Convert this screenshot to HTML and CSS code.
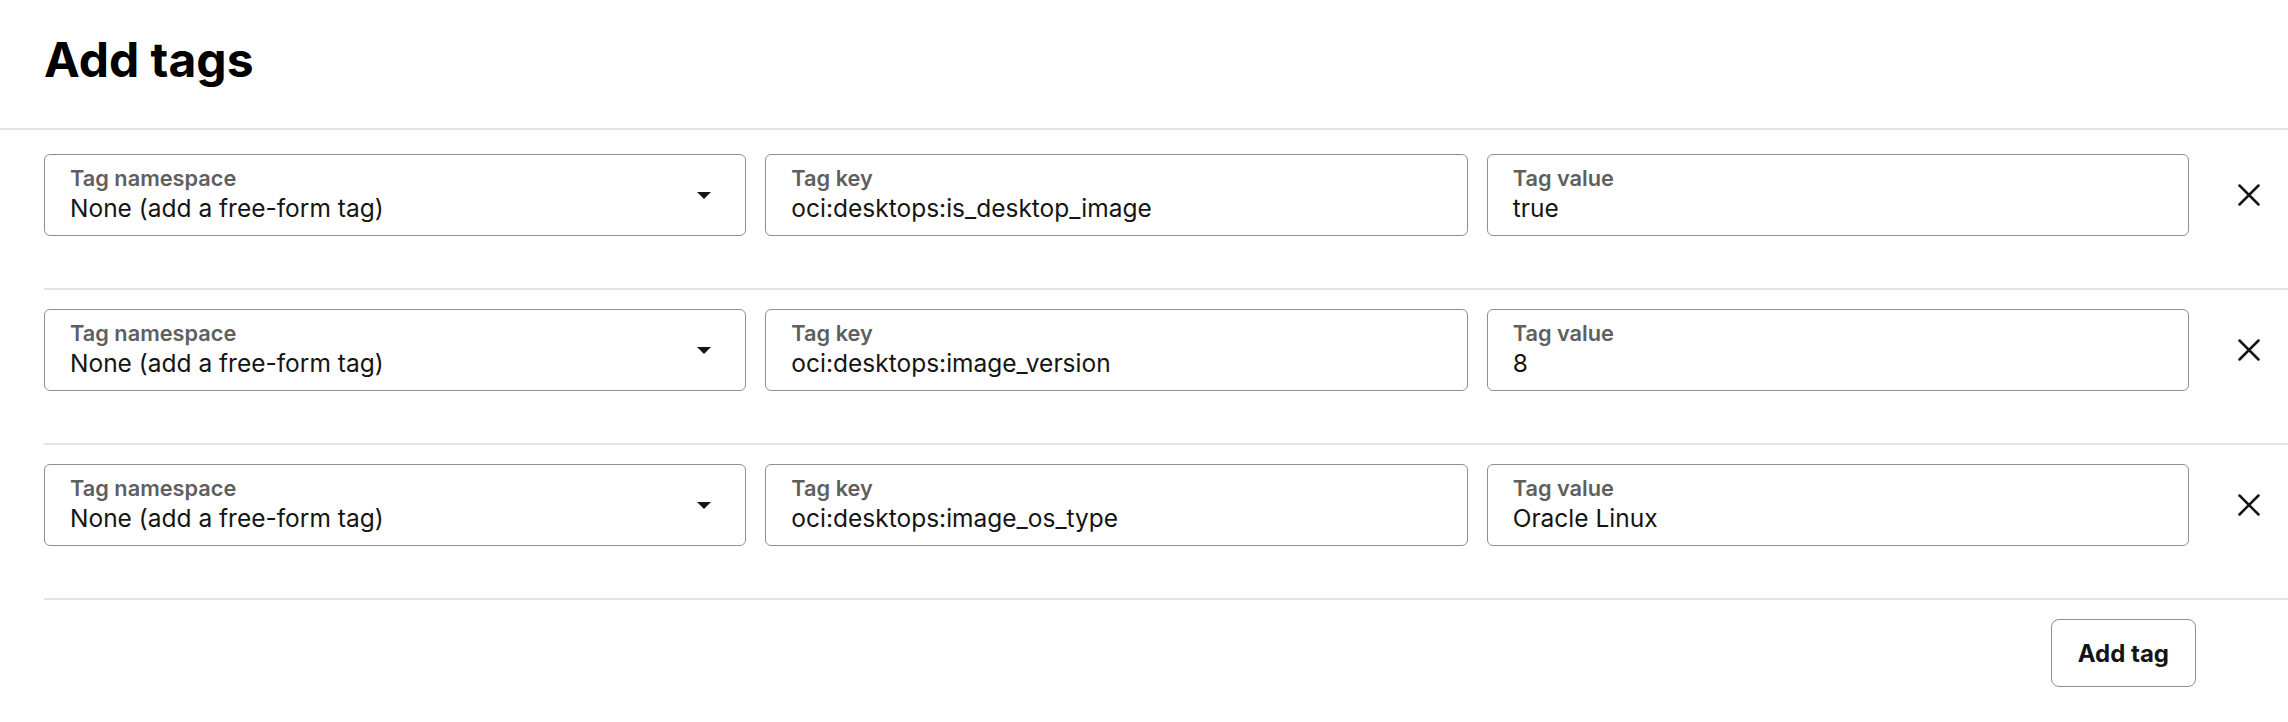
FILE: index.html
```html
<!DOCTYPE html>
<html lang="en">
<head>
<meta charset="utf-8">
<title>Add tags</title>
<link rel="stylesheet" href="styles.css">
</head>
<body>
<div class="panel">
  <header class="panel-header">
    <h1 class="title">Add tags</h1>
  </header>
  <div class="tag-list">
    <div class="tag-row">
      <div class="fields">
        <div class="field field-select">
          <span class="field-label">Tag namespace</span>
          <span class="field-value">None (add a free-form tag)</span>
          <span class="caret"></span>
        </div>
        <div class="field">
          <span class="field-label">Tag key</span>
          <span class="field-value">oci:desktops:is_desktop_image</span>
        </div>
        <div class="field">
          <span class="field-label">Tag value</span>
          <span class="field-value">true</span>
        </div>
      </div>
      <button class="remove-btn" aria-label="Remove tag">
        <svg width="22" height="22" viewBox="0 0 22 22"><path d="M1.5 1.5 L20.5 20.5 M20.5 1.5 L1.5 20.5" stroke="#161513" stroke-width="2.5" stroke-linecap="round" fill="none"/></svg>
      </button>
    </div>
    <div class="tag-row">
      <div class="fields">
        <div class="field field-select">
          <span class="field-label">Tag namespace</span>
          <span class="field-value">None (add a free-form tag)</span>
          <span class="caret"></span>
        </div>
        <div class="field">
          <span class="field-label">Tag key</span>
          <span class="field-value">oci:desktops:image_version</span>
        </div>
        <div class="field">
          <span class="field-label">Tag value</span>
          <span class="field-value">8</span>
        </div>
      </div>
      <button class="remove-btn" aria-label="Remove tag">
        <svg width="22" height="22" viewBox="0 0 22 22"><path d="M1.5 1.5 L20.5 20.5 M20.5 1.5 L1.5 20.5" stroke="#161513" stroke-width="2.5" stroke-linecap="round" fill="none"/></svg>
      </button>
    </div>
    <div class="tag-row">
      <div class="fields">
        <div class="field field-select">
          <span class="field-label">Tag namespace</span>
          <span class="field-value">None (add a free-form tag)</span>
          <span class="caret"></span>
        </div>
        <div class="field">
          <span class="field-label">Tag key</span>
          <span class="field-value">oci:desktops:image_os_type</span>
        </div>
        <div class="field">
          <span class="field-label">Tag value</span>
          <span class="field-value">Oracle Linux</span>
        </div>
      </div>
      <button class="remove-btn" aria-label="Remove tag">
        <svg width="22" height="22" viewBox="0 0 22 22"><path d="M1.5 1.5 L20.5 20.5 M20.5 1.5 L1.5 20.5" stroke="#161513" stroke-width="2.5" stroke-linecap="round" fill="none"/></svg>
      </button>
    </div>
  </div>
  <div class="panel-footer">
    <button class="add-btn">Add tag</button>
  </div>
</div>
</body>
</html>
```
FILE: styles.css
```css
* { box-sizing: border-box; }
html, body {
  margin: 0;
  padding: 0;
  background: #ffffff;
}
body {
  font-family: Inter, "Noto Sans", "Liberation Sans", sans-serif;
  color: #161513;
}
.panel {
  width: 2288px;
}
.panel-header {
  padding: 31px 44px 39px;
  border-bottom: 2px solid #e4e4e4;
}
.title {
  margin: 0;
  font-size: 48px;
  line-height: 58px;
  font-weight: 700;
  color: #000000;
}
.tag-list {
  padding-top: 5px;
}
.tag-row {
  display: flex;
  align-items: center;
  margin-left: 44px;
  padding: 19px 17px 52px 0;
  border-bottom: 2px solid #e4e4e4;
}
.fields {
  flex: 1;
  display: grid;
  grid-template-columns: 1fr 1fr 1fr;
  column-gap: 19px;
}
.field {
  position: relative;
  height: 82px;
  border: 1px solid #8f8f8f;
  border-radius: 6px;
  padding: 11px 25px 0;
  display: flex;
  flex-direction: column;
}
.field-label {
  font-size: 21.75px;
  line-height: 24px;
  font-weight: 600;
  color: #5f5f5f;
  margin-bottom: 3px;
}
.field-value {
  font-size: 24.5px;
  line-height: 30px;
  font-weight: 400;
  color: #161513;
}
.caret {
  position: absolute;
  right: 34px;
  top: 37px;
  width: 0;
  height: 0;
  border-left: 7.5px solid transparent;
  border-right: 7.5px solid transparent;
  border-top: 7px solid #161513;
}
.remove-btn {
  margin-left: 38px;
  width: 44px;
  height: 44px;
  padding: 0;
  border: none;
  background: transparent;
  display: flex;
  align-items: center;
  justify-content: center;
}
.panel-footer {
  display: flex;
  justify-content: flex-end;
  padding: 19px 92px 35px 0;
}
.add-btn {
  height: 68px;
  padding: 0 26px;
  border: 1px solid #8f8f8f;
  border-radius: 8px;
  background: #ffffff;
  font-family: Inter, "Noto Sans", sans-serif;
  font-size: 24px;
  font-weight: 700;
  color: #161513;
}
```
